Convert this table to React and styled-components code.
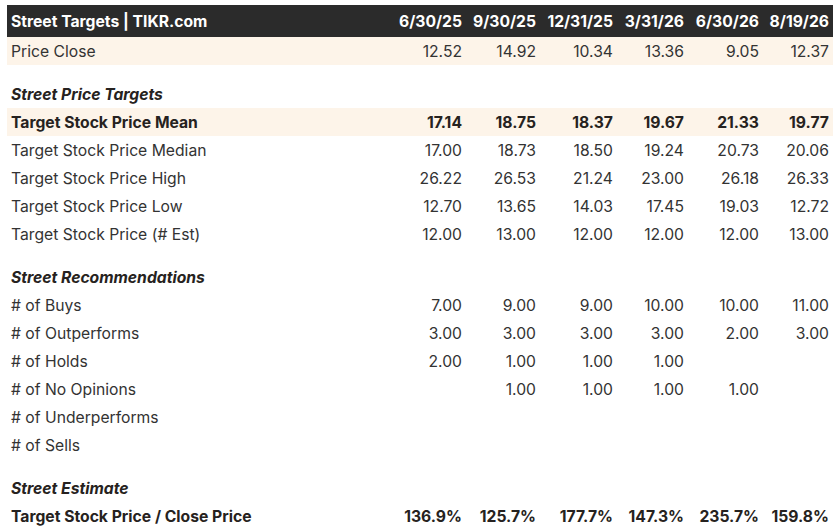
import React from 'react';
import styled, { createGlobalStyle } from 'styled-components';

const GlobalStyle = createGlobalStyle`
  html, body {
    margin: 0;
    padding: 0;
    background: #ffffff;
  }
  body {
    font-family: Inter, "Noto Sans", "Liberation Sans", sans-serif;
    -webkit-font-smoothing: antialiased;
  }
`;

const COLS = '387px 72px 74px 77px 71px 75px 70px';

const Page = styled.div`
  padding: 5px 0 0 7px;
  width: 826px;
`;

const Table = styled.div`
  display: flex;
  flex-direction: column;
`;

const HeaderRow = styled.div`
  display: grid;
  grid-template-columns: ${COLS};
  height: 32px;
  align-items: center;
  background: #2b2b2b;
  color: #ffffff;
  font-size: 15.7px;
  font-weight: 700;
`;

const Row = styled.div`
  display: grid;
  grid-template-columns: ${COLS};
  height: 28px;
  align-items: center;
  font-size: 15.7px;
  color: #333333;
  background: ${({ $shaded }) => ($shaded ? '#fdf4e9' : 'transparent')};
  font-weight: ${({ $bold }) => ($bold ? 700 : 400)};
  ${({ $bold }) => $bold && 'color: #262220;'}
`;

const Spacer = styled.div`
  height: 15px;
`;

const Label = styled.div`
  padding-left: 4px;
  white-space: nowrap;
`;

const SectionTitle = styled(Label)`
  font-weight: 700;
  font-style: italic;
  color: #262220;
`;

const Cell = styled.div`
  text-align: right;
  padding-right: 4px;
  white-space: nowrap;
`;

const dates = ['6/30/25', '9/30/25', '12/31/25', '3/31/26', '6/30/26', '8/19/26'];

const sections = [
  {
    rows: [
      { label: 'Price Close', shaded: true, values: ['12.52', '14.92', '10.34', '13.36', '9.05', '12.37'] },
    ],
  },
  {
    title: 'Street Price Targets',
    rows: [
      { label: 'Target Stock Price Mean', shaded: true, bold: true, values: ['17.14', '18.75', '18.37', '19.67', '21.33', '19.77'] },
      { label: 'Target Stock Price Median', values: ['17.00', '18.73', '18.50', '19.24', '20.73', '20.06'] },
      { label: 'Target Stock Price High', values: ['26.22', '26.53', '21.24', '23.00', '26.18', '26.33'] },
      { label: 'Target Stock Price Low', values: ['12.70', '13.65', '14.03', '17.45', '19.03', '12.72'] },
      { label: 'Target Stock Price (# Est)', values: ['12.00', '13.00', '12.00', '12.00', '12.00', '13.00'] },
    ],
  },
  {
    title: 'Street Recommendations',
    rows: [
      { label: '# of Buys', values: ['7.00', '9.00', '9.00', '10.00', '10.00', '11.00'] },
      { label: '# of Outperforms', values: ['3.00', '3.00', '3.00', '3.00', '2.00', '3.00'] },
      { label: '# of Holds', values: ['2.00', '1.00', '1.00', '1.00', '', ''] },
      { label: '# of No Opinions', values: ['', '1.00', '1.00', '1.00', '1.00', ''] },
      { label: '# of Underperforms', values: ['', '', '', '', '', ''] },
      { label: '# of Sells', values: ['', '', '', '', '', ''] },
    ],
  },
  {
    title: 'Street Estimate',
    rows: [
      { label: 'Target Stock Price / Close Price', bold: true, values: ['136.9%', '125.7%', '177.7%', '147.3%', '235.7%', '159.8%'] },
    ],
  },
];

const DataRow = ({ row }) => (
  <Row $shaded={row.shaded} $bold={row.bold}>
    <Label>{row.label}</Label>
    {row.values.map((v, i) => (
      <Cell key={i}>{v}</Cell>
    ))}
  </Row>
);

export default function App() {
  return (
    <>
      <GlobalStyle />
      <Page>
        <Table>
          <HeaderRow>
            <Label>Street Targets | TIKR.com</Label>
            {dates.map(d => (
              <Cell key={d}>{d}</Cell>
            ))}
          </HeaderRow>
          {sections.map((section, si) => (
            <React.Fragment key={si}>
              {si > 0 ? <Spacer /> : null}
              {section.title ? (
                <Row>
                  <SectionTitle>{section.title}</SectionTitle>
                </Row>
              ) : null}
              {section.rows.map(row => (
                <DataRow key={row.label} row={row} />
              ))}
            </React.Fragment>
          ))}
        </Table>
      </Page>
    </>
  );
}
